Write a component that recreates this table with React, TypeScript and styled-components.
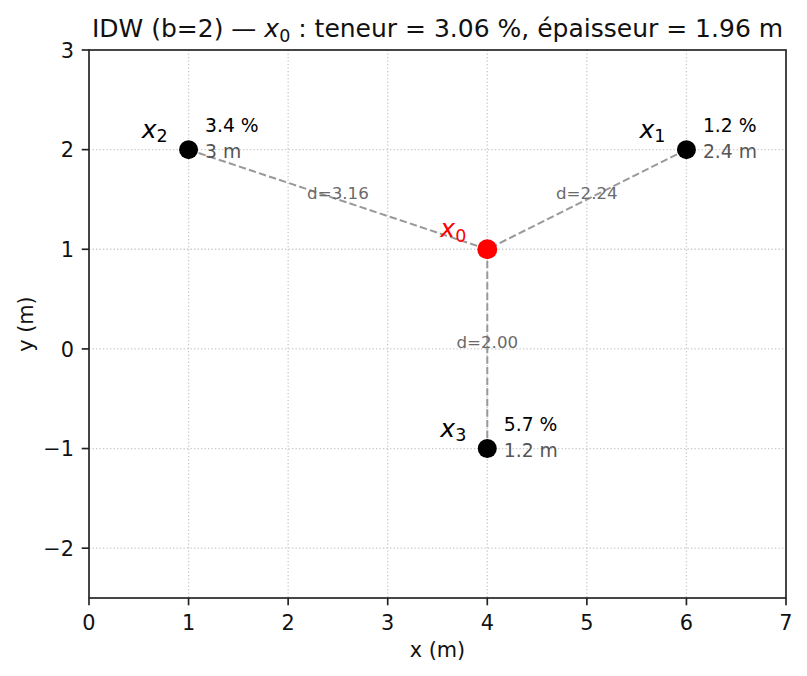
import React from 'react';
import styled, { createGlobalStyle } from 'styled-components';

const GlobalStyle = createGlobalStyle`
  html, body {
    margin: 0;
    padding: 0;
    background: #ffffff;
  }
`;

const W = 807;
const H = 676;

// figure was saved at 150 dpi: 1pt = 150/72 px
const PT = 150 / 72;

// axes box, in pixels
const AX = { left: 89, right: 786, top: 50, bottom: 598 };
const XMIN = 0;
const XMAX = 7;
const YMIN = -2.5;
const YMAX = 3;

const sx = (v: number) => AX.left + ((v - XMIN) / (XMAX - XMIN)) * (AX.right - AX.left);
const sy = (v: number) => AX.top + ((YMAX - v) / (YMAX - YMIN)) * (AX.bottom - AX.top);

type Sample = {
  name: string;
  x: number;
  y: number;
  grade: string;
  thickness: string;
};

const target = { x: 4, y: 1 };

const samples: Sample[] = [
  { name: '1', x: 6, y: 2, grade: '1.2 %', thickness: '2.4 m' },
  { name: '2', x: 1, y: 2, grade: '3.4 %', thickness: '3 m' },
  { name: '3', x: 4, y: -1, grade: '5.7 %', thickness: '1.2 m' },
];

const xTicks = [0, 1, 2, 3, 4, 5, 6, 7];
const yTicks = [-2, -1, 0, 1, 2, 3];

const Figure = styled.div`
  display: flex;
  width: ${W}px;
  height: ${H}px;
  background: #ffffff;
`;

const Canvas = styled.svg`
  display: block;
  font-family: 'DejaVu Sans', 'Liberation Sans', sans-serif;
`;

const GridLine = styled.line`
  stroke: #c8c8c8;
  stroke-width: 1.3;
  stroke-dasharray: 1.3 2.2;
`;

const Spine = styled.rect`
  fill: none;
  stroke: #222222;
  stroke-width: ${0.8 * PT};
`;

const Tick = styled.line`
  stroke: #222222;
  stroke-width: ${0.8 * PT};
`;

const TickLabel = styled.text<{ $anchor: 'middle' | 'end' }>`
  font-size: ${10 * PT}px;
  fill: #111111;
  text-anchor: ${(p) => p.$anchor};
`;

const AxisLabel = styled.text`
  font-size: ${10 * PT}px;
  fill: #111111;
  text-anchor: middle;
`;

const Title = styled.text`
  font-size: ${12 * PT}px;
  fill: #111111;
  text-anchor: middle;
`;

const MathVar = styled.tspan`
  font-style: italic;
`;

const Sub = styled.tspan`
  font-size: 0.7em;
  font-style: normal;
`;

const Link = styled.line`
  stroke: #999999;
  stroke-width: 2;
  stroke-dasharray: 7.4 3.2;
`;

const Distance = styled.text`
  font-size: ${8 * PT}px;
  fill: #6a6a6a;
  text-anchor: middle;
`;

const Marker = styled.circle<{ $target?: boolean }>`
  fill: ${(p) => (p.$target ? '#ff0000' : '#000000')};
`;

const PointName = styled.text<{ $target?: boolean }>`
  font-size: ${12 * PT}px;
  fill: ${(p) => (p.$target ? '#ff0000' : '#000000')};
  text-anchor: end;
`;

const Grade = styled.text`
  font-size: ${9 * PT}px;
  fill: #000000;
`;

const Thickness = styled.text`
  font-size: ${9 * PT}px;
  fill: #555555;
`;

const SubscriptName: React.FC<{ index: string }> = ({ index }) => (
  <>
    <MathVar>x</MathVar>
    <Sub dy={4.5}>{index}</Sub>
  </>
);

const IdwPlot: React.FC = () => {
  const tx = sx(target.x);
  const ty = sy(target.y);

  return (
    <Canvas width={W} height={H} viewBox={`0 0 ${W} ${H}`}>
      {xTicks.slice(1, -1).map((t) => (
        <GridLine key={`gx${t}`} x1={sx(t)} x2={sx(t)} y1={AX.top} y2={AX.bottom} />
      ))}
      {yTicks.slice(0, -1).map((t) => (
        <GridLine key={`gy${t}`} x1={AX.left} x2={AX.right} y1={sy(t)} y2={sy(t)} />
      ))}

      {samples.map((s) => {
        const px = sx(s.x);
        const py = sy(s.y);
        const d = Math.hypot(s.x - target.x, s.y - target.y);
        return (
          <g key={`l${s.name}`}>
            <Link x1={px} y1={py} x2={tx} y2={ty} />
            <Distance x={(px + tx) / 2} y={(py + ty) / 2 - 0.5}>
              d={d.toFixed(2)}
            </Distance>
          </g>
        );
      })}

      {samples.map((s) => {
        const px = sx(s.x);
        const py = sy(s.y);
        return (
          <g key={`p${s.name}`}>
            <Marker cx={px} cy={py} r={9.5} />
            <PointName x={px - 21} y={py - 12}>
              <SubscriptName index={s.name} />
            </PointName>
            <Grade x={px + 16.5} y={py - 17.3}>
              {s.grade}
            </Grade>
            <Thickness x={px + 16.5} y={py + 8}>
              {s.thickness}
            </Thickness>
          </g>
        );
      })}

      <Marker $target cx={tx} cy={ty} r={10} />
      <PointName $target x={tx - 21} y={ty - 12}>
        <SubscriptName index="0" />
      </PointName>

      <Spine
        x={AX.left}
        y={AX.top}
        width={AX.right - AX.left}
        height={AX.bottom - AX.top}
      />

      {xTicks.map((t) => (
        <g key={`tx${t}`}>
          <Tick x1={sx(t)} x2={sx(t)} y1={AX.bottom} y2={AX.bottom + 3.5 * PT} />
          <TickLabel $anchor="middle" x={sx(t)} y={629.5}>
            {t}
          </TickLabel>
        </g>
      ))}
      {yTicks.map((t) => (
        <g key={`ty${t}`}>
          <Tick x1={AX.left - 3.5 * PT} x2={AX.left} y1={sy(t)} y2={sy(t)} />
          <TickLabel $anchor="end" x={74} y={sy(t) + 7.6}>
            {t < 0 ? `\u2212${Math.abs(t)}` : t}
          </TickLabel>
        </g>
      ))}

      <AxisLabel x={(AX.left + AX.right) / 2} y={657}>
        x (m)
      </AxisLabel>
      <AxisLabel transform={`translate(33 ${(AX.top + AX.bottom) / 2}) rotate(-90)`}>
        y (m)
      </AxisLabel>

      <Title x={(AX.left + AX.right) / 2} y={37.3}>
        IDW (b=2) — <SubscriptName index="0" />
        <tspan dy={-4.5}> : teneur = 3.06 %, épaisseur = 1.96 m</tspan>
      </Title>
    </Canvas>
  );
};

export default function App() {
  return (
    <>
      <GlobalStyle />
      <Figure>
        <IdwPlot />
      </Figure>
    </>
  );
}
